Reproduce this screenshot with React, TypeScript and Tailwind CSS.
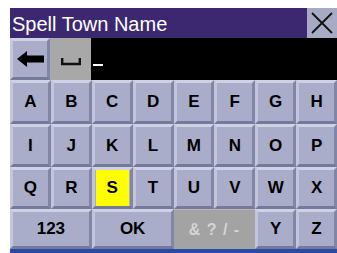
import React from 'react'

type Key = { label: string; span?: number; kind?: 'normal' | 'active' | 'disabled' }

const ROWS: { keys: Key[]; h: string }[] = [
  { h: 'h-[44px]', keys: 'ABCDEFGH'.split('').map((l) => ({ label: l })) },
  { h: 'h-[43px]', keys: 'IJKLMNOP'.split('').map((l) => ({ label: l })) },
  {
    h: 'h-[42px]',
    keys: 'QRSTUVWX'.split('').map((l) => ({ label: l, kind: l === 'S' ? 'active' : 'normal' })),
  },
  {
    h: 'h-[40px]',
    keys: [
      { label: '123', span: 2 },
      { label: 'OK', span: 2 },
      { label: '& ? / -', span: 2, kind: 'disabled' },
      { label: 'Y' },
      { label: 'Z' },
    ],
  },
]

const bevel = 'border-[3px] border-t-[#cfd2e6] border-l-[#c2c5dc] border-b-[#75799a] border-r-[#8286a6] bg-[#a9adc9]'

function KeyButton({ k }: { k: Key }) {
  const span = k.span === 2 ? 'col-span-2' : 'col-span-1'
  if (k.kind === 'disabled') {
    return (
      <div className={`${span} flex items-center justify-center bg-[#a3a3a3] border-t border-[#b8b8b8] text-[16px] font-bold text-[#d4d4d4] tracking-[1px]`}>
        {k.label}
      </div>
    )
  }
  return (
    <div className={`${span} flex items-center justify-center ${bevel}`}>
      {k.kind === 'active' ? (
        <div className="w-full h-full m-[1px] bg-[#ffff00] flex items-center justify-center text-[17px] font-bold text-black">
          {k.label}
        </div>
      ) : (
        <span className="text-[17px] font-bold text-black">{k.label}</span>
      )}
    </div>
  )
}

export default function App() {
  return (
    <div className="w-[337px] h-[253px] bg-white pl-[10px] pt-[8px] flex flex-col" style={{ fontFamily: '"Liberation Sans", Arial, sans-serif' }}>
      {/* Header */}
      <div className="h-[30px] flex bg-[#3b2870]">
        <div className="flex-1 flex items-center pl-[2px] text-white text-[20px] leading-none pt-[1px]">Spell Town Name</div>
        <div className="w-[30px] bg-[#a6aac4] flex items-center justify-center">
          <svg width="24" height="24" viewBox="0 0 24 24">
            <path d="M2 2 L22 22 M22 2 L2 22" stroke="#111" strokeWidth="1.8" />
          </svg>
        </div>
      </div>

      {/* Input row */}
      <div className="h-[42px] flex">
        <div className={`w-[40px] flex items-center justify-center ${bevel}`}>
          <svg width="27" height="16" viewBox="0 0 27 16">
            <path d="M0 8 L10 0 L10 4.5 L27 4.5 L27 11.5 L10 11.5 L10 16 Z" fill="#000" />
          </svg>
        </div>
        <div className="w-[41px] bg-[#a8a8a8] flex items-center justify-center pt-[6px]">
          <svg width="20" height="8" viewBox="0 0 20 8">
            <path d="M1.2 0 L1.2 6 L18.8 6 L18.8 0" stroke="#111" strokeWidth="2.4" fill="none" />
          </svg>
        </div>
        <div className="flex-1 bg-black flex items-end pb-[14px] pl-[2px]">
          <div className="w-[10px] h-[2px] bg-white" />
        </div>
      </div>

      {/* Keyboard */}
      {ROWS.map((row, i) => (
        <div key={i} className={`${row.h} grid grid-cols-8`}>
          {row.keys.map((k) => (
            <KeyButton key={k.label} k={k} />
          ))}
        </div>
      ))}
      <div className="flex-1 bg-[#2a4aa8]" />
    </div>
  )
}
